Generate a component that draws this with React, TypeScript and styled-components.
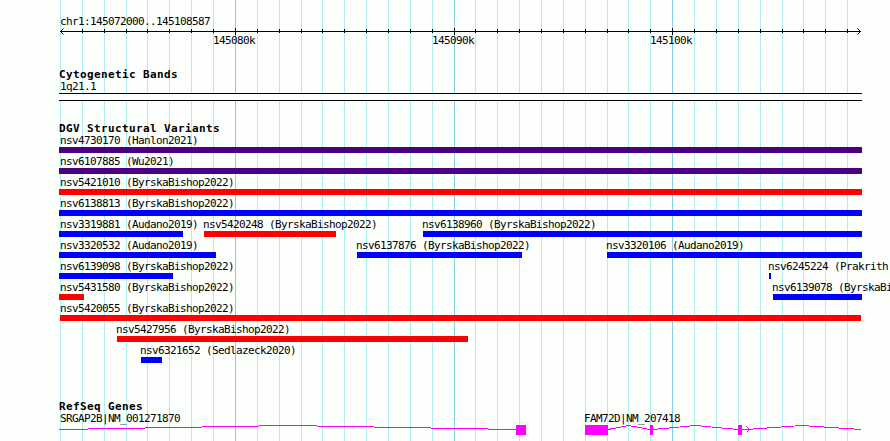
import styled, { createGlobalStyle } from 'styled-components';

const GlobalStyle = createGlobalStyle`
  body {
    margin: 0;
    background: #fdfffd;
  }
`;

const Browser = styled.main`
  position: relative;
  width: 890px;
  height: 441px;
  overflow: hidden;
  color: #000;
  font-family: 'DejaVu Sans Mono', monospace;
`;

const GridLines = styled.svg`
  position: absolute;
  inset: 0;
  z-index: -1;
`;

const Drawing = styled.svg`
  display: block;
`;

const Label = styled.div`
  height: 15px;
  padding-left: 1px;
  font-size: 11px;
  line-height: 18px;
  letter-spacing: -0.622px;
  white-space: pre;
`;

const Region = styled(Label)`
  padding: 13px 0 0 60px;
`;

const Scale = styled.div`
  display: grid;
  margin-top: -3px;
`;

const ScaleLabel = styled(Label)<{ $center: number }>`
  grid-area: 1 / 1;
  margin-left: ${({ $center }) => $center - 23}px;
`;

const Track = styled.section<{ $gap: number }>`
  padding-top: ${({ $gap }) => $gap}px;
`;

const TrackTitle = styled.h2`
  height: 12px;
  margin: 0;
  padding-left: 59px;
  font-size: 11px;
  font-weight: 700;
  line-height: 18px;
  letter-spacing: 0.378px;
  white-space: pre;
`;

const TrackRow = styled.div`
  display: grid;
  grid-template-columns: 890px;
  height: 21px;
`;

const Feature = styled.div<{ $start: number }>`
  grid-area: 1 / 1;
  margin-left: ${({ $start }) => $start}px;
`;

const FeatureLabel = styled(Label)<{ $shift: number }>`
  padding-left: 0;
  margin-left: ${({ $shift }) => $shift}px;
`;

const Bar = styled.div<{ $width: number; $color: string }>`
  width: ${({ $width }) => $width}px;
  height: 6px;
  background: ${({ $color }) => $color};
`;

const Band = styled.div`
  width: 803px;
  height: 6px;
  margin-left: 59px;
  border: solid #000;
  border-width: 1px 0;
  background: #fdfffd;
`;

const GeneLabels = styled.div`
  display: grid;
  height: 15px;
`;

const GeneLabel = styled(Label)<{ $start: number }>`
  grid-area: 1 / 1;
  margin-left: ${({ $start }) => $start}px;
`;

const GAIN = '#0000ff';
const LOSS = '#ff0000';
const COMPLEX = '#4b0082';

const MAJOR = [235, 454, 672];
const MINOR = [
  60, 82, 104, 126, 147, 169, 191, 213, 257, 279, 301, 322, 344, 366, 388, 410, 432,
  475, 497, 519, 541, 563, 585, 607, 628, 650, 694, 716, 738, 760, 782, 803, 825, 847,
];

type Variant = { name: string; start: number; end: number; color: string };

const variants: Variant[][] = [
  [{ name: 'nsv4730170 (Hanlon2021)', start: 59, end: 862, color: COMPLEX }],
  [{ name: 'nsv6107885 (Wu2021)', start: 59, end: 862, color: COMPLEX }],
  [{ name: 'nsv5421010 (ByrskaBishop2022)', start: 59, end: 862, color: LOSS }],
  [{ name: 'nsv6138813 (ByrskaBishop2022)', start: 59, end: 862, color: GAIN }],
  [
    { name: 'nsv3319881 (Audano2019)', start: 59, end: 183, color: GAIN },
    { name: 'nsv5420248 (ByrskaBishop2022)', start: 204, end: 336, color: LOSS },
    { name: 'nsv6138960 (ByrskaBishop2022)', start: 423, end: 862, color: GAIN },
  ],
  [
    { name: 'nsv3320532 (Audano2019)', start: 59, end: 216, color: GAIN },
    { name: 'nsv6137876 (ByrskaBishop2022)', start: 357, end: 522, color: GAIN },
    { name: 'nsv3320106 (Audano2019)', start: 607, end: 862, color: GAIN },
  ],
  [
    { name: 'nsv6139098 (ByrskaBishop2022)', start: 59, end: 173, color: GAIN },
    { name: 'nsv6245224 (Prakrith', start: 769, end: 771, color: GAIN },
  ],
  [
    { name: 'nsv5431580 (ByrskaBishop2022)', start: 59, end: 84, color: LOSS },
    { name: 'nsv6139078 (ByrskaBi', start: 773, end: 862, color: GAIN },
  ],
  [{ name: 'nsv5420055 (ByrskaBishop2022)', start: 60, end: 861, color: LOSS }],
  [{ name: 'nsv5427956 (ByrskaBishop2022)', start: 117, end: 468, color: LOSS }],
  [{ name: 'nsv6321652 (Sedlazeck2020)', start: 141, end: 162, color: GAIN }],
];

// labels never start left of the panel edge
const labelShift = (start: number) => Math.max(start - 1, 60) - start;

function Ruler() {
  return (
    <Drawing width="890" height="7" shapeRendering="crispEdges">
      <rect x="60" y="3" width="801" height="1" />
      {MINOR.slice(1).map((x) => (
        <rect key={x} x={x} y="1" width="1" height="4" />
      ))}
      {MAJOR.map((x) => (
        <rect key={x} x={x} y="0" width="1" height="7" />
      ))}
      <path
        d="M63.5 .5L60.5 3.5L63.5 6.5M857.5 .5L860.5 3.5L857.5 6.5"
        fill="none"
        stroke="#000"
        shapeRendering="auto"
      />
    </Drawing>
  );
}

function Genes() {
  return (
    <Drawing width="890" height="16" fill="#ff00ff" shapeRendering="crispEdges">
      <g fill="none" stroke="#ff00ff">
        <path d="M59 4.5H60L288 .5L516 4.5" />
        <path d="M608 4.5L628.5 .5L650 4.5M653 4.5L695.5 .5L738 4.5M742 4.5H746L801.5 .5L861 4.5" />
        <path d="M742 4.5H750M746.5 1.5L749.5 4.5L746.5 7.5" />
      </g>
      <rect x="516" y="0" width="10" height="10" />
      <rect x="585" y="0" width="23" height="10" />
      <rect x="650" y="0" width="3" height="10" />
      <rect x="738" y="0" width="4" height="10" />
    </Drawing>
  );
}

export default function App() {
  return (
    <>
      <GlobalStyle />
      <Browser>
        <GridLines width="890" height="441" shapeRendering="crispEdges">
          {MINOR.map((x) => (
            <rect key={x} x={x} y="0" width="1" height="441" fill="#afeeee" />
          ))}
          {MAJOR.map((x) => (
            <rect key={x} x={x} y="0" width="1" height="441" fill="#87ceeb" />
          ))}
        </GridLines>

        <Region>chr1:145072000..145108587</Region>
        <Ruler />
        <Scale>
          {MAJOR.map((x, i) => (
            <ScaleLabel key={x} $center={x}>{`${145080 + i * 10}k`}</ScaleLabel>
          ))}
        </Scale>

        <Track $gap={19}>
          <TrackTitle>Cytogenetic Bands</TrackTitle>
          <GeneLabels>
            <GeneLabel $start={59}>1q21.1</GeneLabel>
          </GeneLabels>
          <Band />
        </Track>

        <Track $gap={19}>
          <TrackTitle>DGV Structural Variants</TrackTitle>
          {variants.map((row) => (
            <TrackRow key={row[0].name}>
              {row.map((v) => (
                <Feature key={v.name} $start={v.start}>
                  <FeatureLabel $shift={labelShift(v.start)}>{v.name}</FeatureLabel>
                  <Bar $width={v.end - v.start} $color={v.color} />
                </Feature>
              ))}
            </TrackRow>
          ))}
        </Track>

        <Track $gap={35}>
          <TrackTitle>RefSeq Genes</TrackTitle>
          <GeneLabels>
            <GeneLabel $start={59}>SRGAP2B|NM_001271870</GeneLabel>
            <GeneLabel $start={583}>FAM72D|NM_207418</GeneLabel>
          </GeneLabels>
          <Genes />
        </Track>
      </Browser>
    </>
  );
}
